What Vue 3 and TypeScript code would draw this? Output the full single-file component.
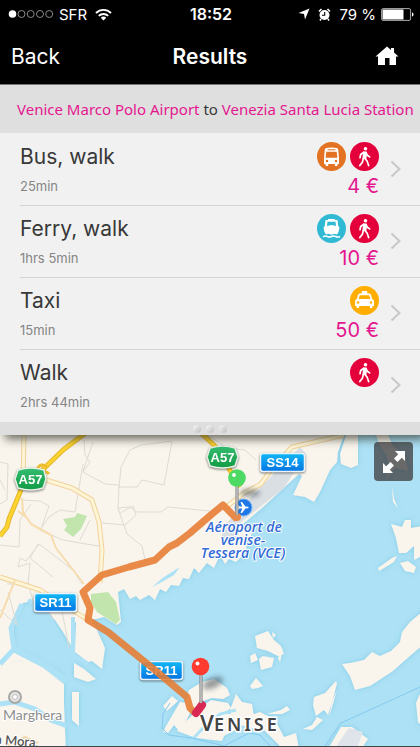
<script setup lang="ts">
type Mode = 'bus' | 'ferry' | 'taxi' | 'walk'

interface Trip {
  title: string
  duration: string
  price: string
  modes: Mode[]
}

const trips: Trip[] = [
  { title: 'Bus, walk', duration: '25min', price: '4 €', modes: ['bus', 'walk'] },
  { title: 'Ferry, walk', duration: '1hrs 5min', price: '10 €', modes: ['ferry', 'walk'] },
  { title: 'Taxi', duration: '15min', price: '50 €', modes: ['taxi'] },
  { title: 'Walk', duration: '2hrs 44min', price: '', modes: ['walk'] },
]
</script>

<template>
  <div class="screen">
    <header class="top">
      <div class="status">
        <div class="status-side">
          <svg class="signal" viewBox="0 0 46 10" aria-hidden="true">
            <circle cx="4.5" cy="5" r="3.8" fill="#fff" />
            <g fill="none" stroke="#aaa" stroke-width="0.8">
              <circle cx="13.5" cy="5" r="3.5" /><circle cx="22.7" cy="5" r="3.5" />
              <circle cx="32" cy="5" r="3.5" /><circle cx="41.2" cy="5" r="3.5" />
            </g>
          </svg>
          <span>SFR</span>
          <svg class="wifi" viewBox="0 0 17 13" aria-hidden="true">
            <g fill="none" stroke="#fff" stroke-width="1.9">
              <path d="M1 5A10.6 10.6 0 0 1 16 5" /><path d="M3.8 7.9A6.6 6.6 0 0 1 13.2 7.9" />
            </g>
            <path d="M8.500 12.500L5.800 9.800A3.900 3.900 0 0 1 11.200 9.800Z" fill="#fff" />
          </svg>
        </div>
        <span class="clock">18:52</span>
        <div class="status-side status-right">
          <svg class="locate" viewBox="0 0 12 12" aria-hidden="true"><path d="M11.500 0.500L7 11.500L6 6L0.500 5Z" fill="#fff" /></svg>
          <svg class="alarm" viewBox="0 0 13 13" aria-hidden="true">
            <circle cx="6.500" cy="7" r="5" fill="#fff" />
            <path d="M1 3.500L3.500 1M12 3.500L9.500 1M3 11L2 12.500M10 11L11 12.500" stroke="#fff" stroke-width="1.600" />
            <path d="M6.700 4V7.300H4" fill="none" stroke="#000" stroke-width="1.100" />
          </svg>
          <span>79 %</span>
          <svg class="battery" viewBox="0 0 33 13" aria-hidden="true">
            <rect x="0.600" y="0.600" width="29" height="11.800" rx="1.500" fill="none" stroke="#aaa" />
            <rect x="1.500" y="1.500" width="21" height="10" fill="#fff" />
            <path d="M31 4.500C33 5 33 8 31 8.500Z" fill="#fff" />
          </svg>
        </div>
      </div>
      <nav class="nav">
        <button type="button" class="back">Back</button>
        <h1>Results</h1>
        <a href="#home" class="home" aria-label="Home">
          <svg viewBox="0 0 24 20" aria-hidden="true">
            <path d="M12 0.500L16 4V2H19V6.600L23.500 10.500H21V19H14.500V12H10V19H3V10.500H0.500Z" fill="#fff" />
          </svg>
        </a>
      </nav>
    </header>

    <p class="route"><em>Venice Marco Polo Airport</em> to <em>Venezia Santa Lucia Station</em></p>

    <ul class="trips">
      <li v-for="trip in trips" :key="trip.title">
        <a href="#trip" class="trip">
          <span class="info">
            <span class="title">{{ trip.title }}</span>
            <span class="duration">{{ trip.duration }}</span>
          </span>
          <span class="offer">
            <span class="modes">
              <span v-for="mode in trip.modes" :key="mode" class="mode" :class="mode">
                <svg v-if="mode === 'bus'" viewBox="0 0 29 29" aria-hidden="true">
                  <path fill="#fff" fill-rule="evenodd" d="M9 6Q14.500 4.800 20 6Q21.300 6.500 21.400 9L22 17V22H20.500V23.500Q19 25 17.800 23.500V22H11.200V23.500Q10 25 8.500 23.500V22H7V17L7.600 9Q7.700 6.500 9 6ZM10.500 7.200V8.200H18.500V7.200ZM9.300 9.800L8.700 15.800H20.300L19.700 9.800ZM10 17.800A1.200 1.200 0 1 0 10 20.200A1.200 1.200 0 1 0 10 17.800ZM19 17.800A1.200 1.200 0 1 0 19 20.200A1.200 1.200 0 1 0 19 17.800Z" />
                </svg>
                <svg v-else-if="mode === 'ferry'" viewBox="0 0 29 29" aria-hidden="true">
                  <path fill="#fff" fill-rule="evenodd" d="M11 5H18V6H20.500L21.300 12.300L22.500 13.500Q22 18 20 20.500L17.500 19.700L14.500 20.700L11.500 19.700L9 20.500Q7 18 6.500 13.500L7.700 12.300L8.500 6H11ZM10.500 7.800L10 12L14.500 11L19 12L18.500 7.800Z" />
                  <path d="M6 23Q8.200 21.300 10.300 22.500T14.500 22.500T18.700 22.500T23 22.500" fill="none" stroke="#fff" stroke-width="1.500" />
                </svg>
                <svg v-else-if="mode === 'taxi'" viewBox="0 0 29 29" aria-hidden="true">
                  <path fill="#fff" fill-rule="evenodd" d="M12 5H17L17.500 7.500H19.500Q20.500 7.500 21 9L22.200 13Q24 13.800 24 15.500V20H22.500V21.500Q21 23 19.800 21.500V20H9.200V21.500Q8 23 6.500 21.500V20H5V15.500Q5 13.800 6.800 13L8 9Q8.500 7.500 9.500 7.500H11.500ZM9.800 9.200L8.600 13H20.400L19.200 9.200ZM8 15.200A1.300 1.300 0 1 0 8 17.800A1.300 1.300 0 1 0 8 15.200ZM21 15.200A1.300 1.300 0 1 0 21 17.800A1.300 1.300 0 1 0 21 15.200Z" />
                </svg>
                <svg v-else viewBox="0 0 29 29" aria-hidden="true">
                  <circle cx="15.500" cy="6.800" r="1.800" fill="#fff" />
                  <path d="M13 9.500H16.300L17 12L16.300 17H12.400Z" fill="#fff" />
                  <path d="M13.500 10.300L10.700 12.500L10 15.700M16 10.500L17.300 13.200L19.600 14.900M13.300 16.500L12.400 20.200L9.800 23.600M15 16.500L17.200 19.300L18.600 23.600" fill="none" stroke="#fff" stroke-width="1.700" stroke-linecap="round" stroke-linejoin="round" />
                </svg>
              </span>
            </span>
            <span v-if="trip.price" class="price">{{ trip.price }}</span>
          </span>
          <svg class="chevron" viewBox="0 0 12 18" aria-hidden="true"><path d="M1.500 1.500L9.500 9L1.500 16.500" fill="none" stroke="#c8c8c8" stroke-width="2" /></svg>
        </a>
      </li>
    </ul>

    <div class="handle"><i></i><i></i><i></i></div>

    <section class="map" aria-label="Route map">
      <svg class="chart" viewBox="0 435 420 311" preserveAspectRatio="xMidYMin slice">
        <defs>
          <linearGradient id="green" x2="0" y2="1"><stop stop-color="#35bd70" /><stop offset="1" stop-color="#129b45" /></linearGradient>
          <linearGradient id="blue" x2="0" y2="1"><stop stop-color="#12b8f6" /><stop offset="1" stop-color="#0474e4" /></linearGradient>
          <filter id="soft" x="-50%" y="-50%" width="200%" height="200%"><feGaussianBlur stdDeviation="2.500" /></filter>
          <filter id="shore" x="-5%" y="-5%" width="110%" height="110%"><feDropShadow dx="0" dy="0" stdDeviation="2.500" flood-color="#6fc4e0" flood-opacity="0.700" /></filter>
        </defs>
        <rect y="435" width="420" height="312" fill="#ade1f5" />

        <!-- land and islands -->
        <g fill="#f9f5ed" filter="url(#shore)">
          <path d="M-8 427H348L344 435L338 452L337 462L330 470L320 492L314 502L305 497L293 495L302 476L299 474L262 508L243 524L252 534L247 541L246 552L236 562L229 559L225 564L220 555L214 568L207 563L199 573L194 568L189 579L183 578L179 586L171 585L166 592L160 589L155 600L149 595L140 600L136 596L130 599L124 589L118 592L121 622L117 625L104 617L92 620L96 628L105 648L102 669L92 661L88 662L75 652L76 623L72 618V647L63 632L55 620L45 607L39 602L28 602L23 603L14 622L14 649L36 659L63 675V683L50 675L20 660L-8 669Z" />
          <path d="M-8 668L20 660L40 668L64 684L64 704L66 754H-8Z" />
          <path d="M348 430H358V465L351 468L341 464L340 454Z" />
          <path d="M74 663L84 669L96 679L88 682L74 677Z" />
          <path d="M72 692H79V726L72 720Z" />
          <path d="M374 430L380 446L386 455L390 468L386 480L395 468L408 471L405 455L393 446L386 430Z" />
          <path d="M392 486L394 499L398 508L393 502Z" />
          <path d="M405 520L402 527L391 524L396 538L399 553L406 553L414 546V560L428 553V525L411 528V520Z" />
          <path d="M378 568L392 558L397 556L394 562L379 571ZM400 563L408 561L416 567L414 573L405 571Z" />
          <path d="M255 636L268 631L274 640L281 646L284 654L278 656L268 651L257 648ZM272 632L276 635L273 638ZM283 648L280 662L278 658ZM250 656L255 653L258 660L251 663ZM259 659L263 656L274 658L272 667L261 670ZM250 686L256 678L263 686L258 688L252 689Z" />
          <path d="M428 607L410 622L402 632L400 642L391 651L380 656L372 652L364 660L350 663L342 664L350 676L355 690L370 686L393 671L403 662L418 649L428 642Z" />
          <path d="M336 681L337 683L332 703L328 715L324 710L316 716L313 705L314 697L325 693Z" />
          <path d="M317 717L323 720L312 730L303 729L312 725ZM337 690L329 718L332 702Z" />
          <path d="M325 754L341 727L352 727L368 739L358 754Z" />
          <path d="M422 689L416 703L418 722L428 732V689Z" />
          <path d="M163 706L172 696L178 701L167 711ZM166 726L180 702L194 704L184 726L179 731L174 725L168 733L163 732Z" />
          <path d="M186 702L189 690L202 682L214 679L227 688L230 695L223 699L212 698L203 701L194 711ZM177 731L195 712L211 700L228 703L231 708L224 713L245 717L260 712L270 717L276 722L284 737L296 733L300 754H284L279 745L264 730L237 729L224 736L222 741L196 738ZM230 710L236 694L242 702L252 704L254 717L244 721L231 716ZM267 714L281 710L287 706L290 710L282 714Z" />
        </g>
        <path d="M339 742L349 728L363 732L355 754H333Z" fill="#dfe4ea" />
        <path d="M222 528L278 469L300 447L306 454L284 488L241 522L236 539L222 541Z" fill="#d6dde2" opacity="0.900" />
        <path d="M152 587L164 577L180 567L174 575L160 583Z" fill="#ade1f5" />
        <g fill="#c1e5ad">
          <path d="M63 519L75 517L77 513L87 516L81 529L73 537L64 530L67 526Z" />
          <path d="M91 594L108 592L116 602L120 620L116 624L97 612L91 602Z" />
        </g>

        <!-- canals -->
        <g fill="none" stroke="#ade1f5">
          <path d="M22 604L11 628L14 649L0 664" stroke-width="5" />
          <path d="M28 600L45 608L65 648M39 633L51 641L65 647" stroke-width="4" />
          <path d="M14 649L45 665L66 681M47 656L70 664" stroke-width="7" />
          <path d="M73 617V655L88 664" stroke-width="4" />
          <path d="M0 704L14 702L35 709L51 720L67 726" stroke-width="5" />
          <path d="M190 742L204 727L220 714L236 710M234 725L258 731L273 744" stroke-width="3" />
        </g>
        <g fill="none" stroke="#83c9ef">
          <path d="M170 703L163 714L162 728L169 735L197 739L224 746L249 733L260 735L271 747M325 746L341 723L420 687" />
        </g>

        <!-- minor streets -->
        <g fill="none" stroke="#dedbd4">
          <path d="M0 462L8 464L7 500L0 504M22 500L40 501L49 506L42 526M83 464L75 512L60 510L49 517L40 530L63 540L86 544L99 546M84 440L85 455L90 462L83 472L105 484L119 485M119 488L121 467L130 450L141 445L172 441L164 485L142 480L137 487H119L118 508L127 534L142 546L145 560M118 508L130 507L137 512L161 512L168 507L210 511M118 509L120 513L133 506L136 515L125 525L102 523M0 545L19 547L20 520L31 504M39 544L26 561L20 558L18 567L30 563L28 584L7 584M39 544L73 570L82 584M38 544L30 558L53 577M0 610L17 625L8 592M93 442L83 471M30 590L34 605M0 480L5 490M90 520L80 540" />
          <path d="M208 435L227 448L245 450L256 460M60 600L69 648M42 600L54 620" />
        </g>
        <g fill="none" stroke-linejoin="round">
          <g stroke="#f1d29c" stroke-width="5">
            <path d="M24 430L23 490M46 480L72 488L92 500L99 522L102 550L100 583M225 508L244 493L261 484L270 471L292 447L344 435M0 577L40 590L88 620" />
          </g>
          <g stroke="#fdf5d5" stroke-width="3">
            <path d="M24 430L23 490M46 480L72 488L92 500L99 522L102 550L100 583M225 508L244 493L261 484L270 471L292 447L344 435M0 577L40 590L88 620" />
          </g>
          <path d="M22 498L23 512L31 524L51 535L56 548L84 584M15 580L0 618M18 511L26 517" stroke="#f6dcae" stroke-width="2" />
          <path d="M7 746L25 737L38 743" stroke="#f3d8ab" stroke-width="2" />
          <g stroke="#e6b62e" stroke-width="5"><path d="M88 431L63 450L31 481M21 490L9 519L7 527L0 536M198 430L216 447L240 487" /></g>
          <g stroke="#fbd42f" stroke-width="3"><path d="M88 431L63 450L31 481M21 490L9 519L7 527L0 536M198 430L216 447L240 487" /></g>
          <path d="M37 469Q41 462 47 467M41 474Q46 470 49 474" stroke="#edbd31" stroke-width="3" />
        </g>

        <!-- place names -->
        <g class="place-blue">
          <text x="244" y="532">Aéroport de</text><text x="243" y="545">venise-</text><text x="243" y="558">Tessera (VCE)</text>
        </g>
        <circle cx="243.500" cy="507.500" r="8.500" fill="#1f78e6" stroke="#76b4f7" />
        <path d="M249 507.500Q248 506.500 245.500 506.500L242 502H240.500L242.200 506.500H239.500L238.300 505H237.200L238 507.500L237.200 510H238.300L239.500 508.500H242.200L240.500 513H242L245.500 508.500Q248 508.500 249 507.500Z" fill="#fff" />
        <circle cx="15" cy="697" r="6" fill="#e5e5e3" stroke="#a8a8a7" stroke-width="2" />
        <circle cx="15" cy="697" r="2.500" fill="#fff" stroke="#bbb" />
        <text class="place-grey" x="3" y="720">Marghera</text>
        <text class="place-dark" x="-5" y="744" transform="rotate(5 0 744)">a Mora.</text>
        <text class="city" x="200" y="731">V<tspan class="city-small">ENISE</tspan></text>

        <!-- road shields -->
        <g class="shield">
          <path d="M18 470Q31 466 44 470L46 479L43 488Q31 492 18 488L15 479Z" fill="url(#green)" stroke="#e9f1e9" stroke-width="1.500" /><text x="30.500" y="484">A57</text>
          <path d="M210 448Q223 444 235 448L238 457L235 466Q223 470 210 466L207 457Z" fill="url(#green)" stroke="#e9f1e9" stroke-width="1.500" /><text x="222.500" y="462">A57</text>
          <rect x="260.500" y="453.500" width="44" height="18" rx="2.500" fill="url(#blue)" stroke="#eaf4fa" stroke-width="1.500" /><text x="282.500" y="467">SS14</text>
          <rect x="34.500" y="593.500" width="42" height="18" rx="2.500" fill="url(#blue)" stroke="#eaf4fa" stroke-width="1.500" /><text x="55.500" y="607">SR11</text>
          <rect x="140.500" y="661.500" width="42" height="18" rx="2.500" fill="url(#blue)" stroke="#eaf4fa" stroke-width="1.500" /><text x="161.500" y="675">SR11</text>
        </g>

        <!-- itinerary -->
        <path d="M237 519L223 505L212 514L190 533L177 543L169 547L155 560L129 567L102 575L83 592L90 608L88 620L108 632L150 666L187 697L190 708L195 713" fill="none" stroke="#e67b31" stroke-opacity="0.880" stroke-width="7" stroke-linejoin="round" />
        <circle cx="237" cy="517" r="4" fill="#e88a4b" />
        <path d="M202 705L196 713" stroke="#d82853" stroke-width="8" stroke-linecap="round" />
        <g filter="url(#soft)" fill="#4a535b" opacity="0.550"><ellipse cx="250" cy="493" rx="10" ry="4" /><ellipse cx="213" cy="683" rx="11" ry="5" transform="rotate(-25 213 683)" /></g>
        <path d="M237 486V515M201 674V703" stroke="#777" stroke-width="3" />
        <path d="M237 486V515M201 674V703" stroke="#c9c9c9" stroke-width="1.500" />
        <circle cx="237" cy="478" r="8.800" fill="#4cd964" /><circle cx="234" cy="475" r="1.900" fill="#fff" />
        <circle cx="200.500" cy="666.500" r="8.800" fill="#ff3b30" /><circle cx="197.500" cy="663.500" r="2" fill="#fff" />
      </svg>
      <button type="button" class="expand" aria-label="Expand map">
        <svg viewBox="0 0 26 26" aria-hidden="true">
          <path d="M14 2H24V12L20.800 8.800L16.500 13L13 9.500L17.200 5.200ZM2 14L5.200 17.200L9.500 13L13 16.500L8.800 20.800L12 24H2Z" fill="#fff" />
        </svg>
      </button>
    </section>
  </div>
</template>

<style>
body {
  margin: 0;
  background: #000;
}
</style>

<style scoped>
.screen {
  display: flex;
  flex-direction: column;
  min-height: 100vh;
  box-sizing: border-box;
  border-bottom: 1px solid #45484b;
  background: #f1f1f1;
  color: #383838;
  font-family: Inter, "Liberation Sans", sans-serif;
}
button {
  border: 0;
  padding: 0;
  background: none;
  color: inherit;
  font: inherit;
  cursor: pointer;
}
.top {
  background: #000;
  color: #fff;
  border-bottom: 1px solid #777;
}
.status {
  display: grid;
  grid-template-columns: 1fr auto 1fr;
  align-items: center;
  height: 28px;
  padding: 0 6px 0 8px;
  font-size: 15px;
}
.status-side {
  display: flex;
  align-items: center;
  gap: 5px;
}
.status-right {
  justify-content: flex-end;
}
.clock {
  font-size: 16px;
  font-weight: 600;
}
.signal { width: 46px; height: 10px; }
.wifi { width: 17px; height: 13px; margin-left: 3px; }
.locate { width: 12px; height: 12px; margin-right: 3px; }
.alarm { width: 13px; height: 13px; margin-right: 3px; }
.battery { width: 33px; height: 13px; }
.nav {
  display: grid;
  grid-template-columns: 1fr auto 1fr;
  align-items: center;
  height: 56px;
  padding: 0 11px;
  font-size: 21px;
}
.back {
  justify-self: start;
}
h1 {
  margin: 0;
  font-size: 21px;
  font-weight: 600;
}
.home {
  justify-self: end;
  display: block;
  width: 24px;
  height: 20px;
  margin-right: 10px;
}
.home svg,
.mode svg {
  display: block;
  width: 100%;
  height: 100%;
}
.route {
  margin: 0;
  padding-left: 17px;
  background: #dfdfdf;
  font-family: "Noto Sans", "Liberation Sans", sans-serif;
  font-size: 15px;
  line-height: 48px;
  white-space: nowrap;
  overflow: hidden;
}
.route em {
  color: #e4178f;
  font-style: normal;
}
.trips {
  margin: 0;
  padding: 0 0 1px 20px;
  list-style: none;
}
.trips li:not(:last-child) {
  box-shadow: 0 1px #d5d5d5;
}
.trip {
  display: flex;
  align-items: center;
  height: 72px;
  padding-right: 18px;
  color: inherit;
  text-decoration: none;
}
.info {
  display: flex;
  flex-direction: column;
  align-self: flex-start;
  gap: 7px;
  flex: 1;
  padding-top: 10px;
}
.title {
  font-size: 21px;
  line-height: 28px;
}
.duration {
  color: #858585;
  font-size: 13px;
  line-height: 16px;
}
.offer {
  display: flex;
  flex-direction: column;
  align-items: flex-end;
  align-self: flex-start;
  gap: 1px;
  padding-top: 9px;
}
.modes {
  display: flex;
  gap: 4px;
}
.mode {
  width: 29px;
  height: 29px;
  border-radius: 50%;
}
.bus { background: #e37222; }
.ferry { background: #2fb9d3; }
.taxi { background: #ffad00; }
.walk { background: #e4003a; }
.price {
  color: #e4178f;
  font-size: 20px;
  line-height: 28px;
}
.chevron {
  width: 12px;
  height: 18px;
  margin-left: 11px;
}
.handle {
  position: relative;
  z-index: 1;
  display: flex;
  justify-content: center;
  align-items: center;
  gap: 5px;
  height: 13px;
  background: #dedede;
  box-shadow: 5px 4px 10px rgba(40, 40, 30, 0.7);
  clip-path: inset(0 0 -20px 0);
}
.handle i {
  width: 8px;
  height: 8px;
  border-radius: 50%;
  background: linear-gradient(135deg, #f8f8f8, #bcbcbc);
}
.map {
  position: relative;
  display: flex;
  flex: 1;
  min-height: 240px;
  overflow: hidden;
}
.chart {
  flex: 1;
  width: 100%;
  min-width: 0;
}
.expand {
  position: absolute;
  top: 7px;
  right: 7px;
  display: grid;
  place-items: center;
  width: 39px;
  height: 39px;
  border-radius: 4px;
  background: rgba(65, 65, 68, 0.78);
}
.expand svg {
  width: 26px;
  height: 26px;
}
.shield {
  filter: drop-shadow(0 1px 1px rgba(0, 0, 0, 0.5));
}
.shield text {
  fill: #fff;
  font: bold 13px "Liberation Sans", sans-serif;
  text-anchor: middle;
}
.place-blue text {
  fill: #316bd5;
  stroke: #fff;
  stroke-width: 2px;
  stroke-linejoin: round;
  paint-order: stroke;
  font: italic 600 14px "Open Sans", sans-serif;
  text-anchor: middle;
}
.place-grey {
  fill: #8d8d8b;
  stroke: #fff;
  stroke-width: 2px;
  paint-order: stroke;
  font: 14px Lato, sans-serif;
}
.place-dark {
  fill: #555;
  stroke: #fff;
  stroke-width: 2px;
  paint-order: stroke;
  font: 600 13px Lato, sans-serif;
}
.city {
  fill: #444;
  stroke: #fff;
  stroke-width: 3px;
  paint-order: stroke;
  font: 600 22px "Noto Sans", sans-serif;
}
.city-small {
  font-size: 18px;
  letter-spacing: 3px;
}
</style>
